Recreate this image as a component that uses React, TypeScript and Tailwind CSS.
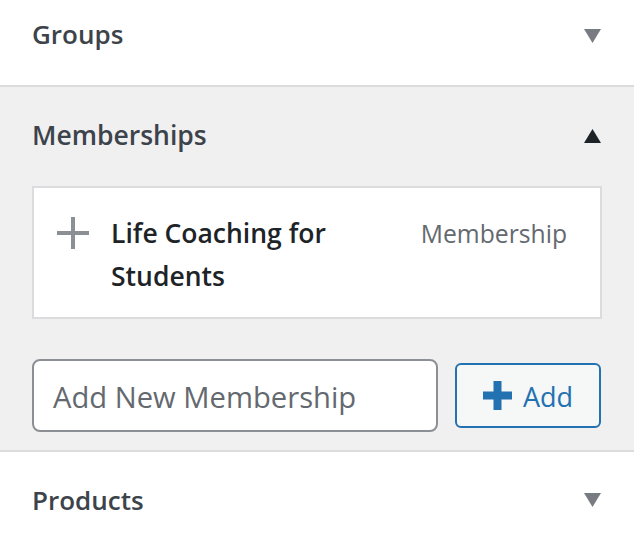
import React from "react";

const font = { fontFamily: '"Open Sans", "Noto Sans", sans-serif' };

function Caret({ up, color }: { up?: boolean; color: string }) {
  return (
    <svg width="17" height="14" viewBox="0 0 17 14" className="shrink-0">
      {up ? (
        <polygon points="8.5,0 17,14 0,14" fill={color} />
      ) : (
        <polygon points="0,0 17,0 8.5,14" fill={color} />
      )}
    </svg>
  );
}

function PlusThin() {
  return (
    <svg width="32" height="32" viewBox="0 0 32 32" className="shrink-0">
      <path d="M16 0v32M0 16h32" stroke="#8c8f94" strokeWidth="4" />
    </svg>
  );
}

function PlusBold() {
  return (
    <svg width="29" height="29" viewBox="0 0 29 29" className="shrink-0">
      <path d="M14.5 0v29M0 14.5h29" stroke="#2271b1" strokeWidth="8" />
    </svg>
  );
}

export default function App() {
  return (
    <div className="w-[634px] h-[547px] overflow-hidden bg-white" style={font}>
      {/* Groups */}
      <div className="h-[87px] border-b-2 border-[#dcdcde] flex items-start justify-between pl-[32px] pr-[33px] pt-[15px]">
        <span className="text-[26px] leading-[38px] font-semibold text-[#3c434a]">Groups</span>
        <div className="mt-[14px]">
          <Caret color="#787c82" />
        </div>
      </div>

      {/* Memberships */}
      <div className="bg-[#f0f0f1] border-b-2 border-[#dcdcde] px-[32px] pb-[18px]">
        <div className="h-[96px] flex items-center justify-between pr-[1px] pt-[1px]">
          <span className="text-[26.5px] font-semibold text-[#3c434a]">Memberships</span>
          <Caret up color="#1d2327" />
        </div>

        <div className="mt-[3px] bg-white border-2 border-[#dcdcde] pl-[23px] pr-[33px] pt-[24px] pb-[19px] flex items-start">
          <div className="mt-[5px]">
            <PlusThin />
          </div>
          <div className="ml-[22px] flex-1 text-[26.5px] leading-[43px] font-semibold text-[#1d2327]">
            Life Coaching for
            <br />
            Students
          </div>
          <div className="text-[24.7px] leading-[43px] text-[#646970]">Membership</div>
        </div>

        <div className="mt-[40px] flex items-center gap-[17px]">
          <div className="w-[406px] h-[73px] rounded-[8px] border-2 border-[#8c8f94] bg-white flex items-center pl-[19px] pt-[4px]">
            <span className="text-[29.2px] text-[#646970]">Add New Membership</span>
          </div>
          <button className="w-[146px] h-[65px] rounded-[6px] border-2 border-[#2271b1] bg-[#f6f7f7] flex items-center justify-center gap-[11px] text-[#2271b1]">
            <PlusBold />
            <span className="text-[27px] pt-[3px]">Add</span>
          </button>
        </div>
      </div>

      {/* Products */}
      <div className="h-[96px] flex items-center justify-between pl-[32px] pr-[33px]">
        <span className="text-[26px] font-semibold text-[#3c434a]">Products</span>
        <Caret color="#787c82" />
      </div>
    </div>
  );
}
